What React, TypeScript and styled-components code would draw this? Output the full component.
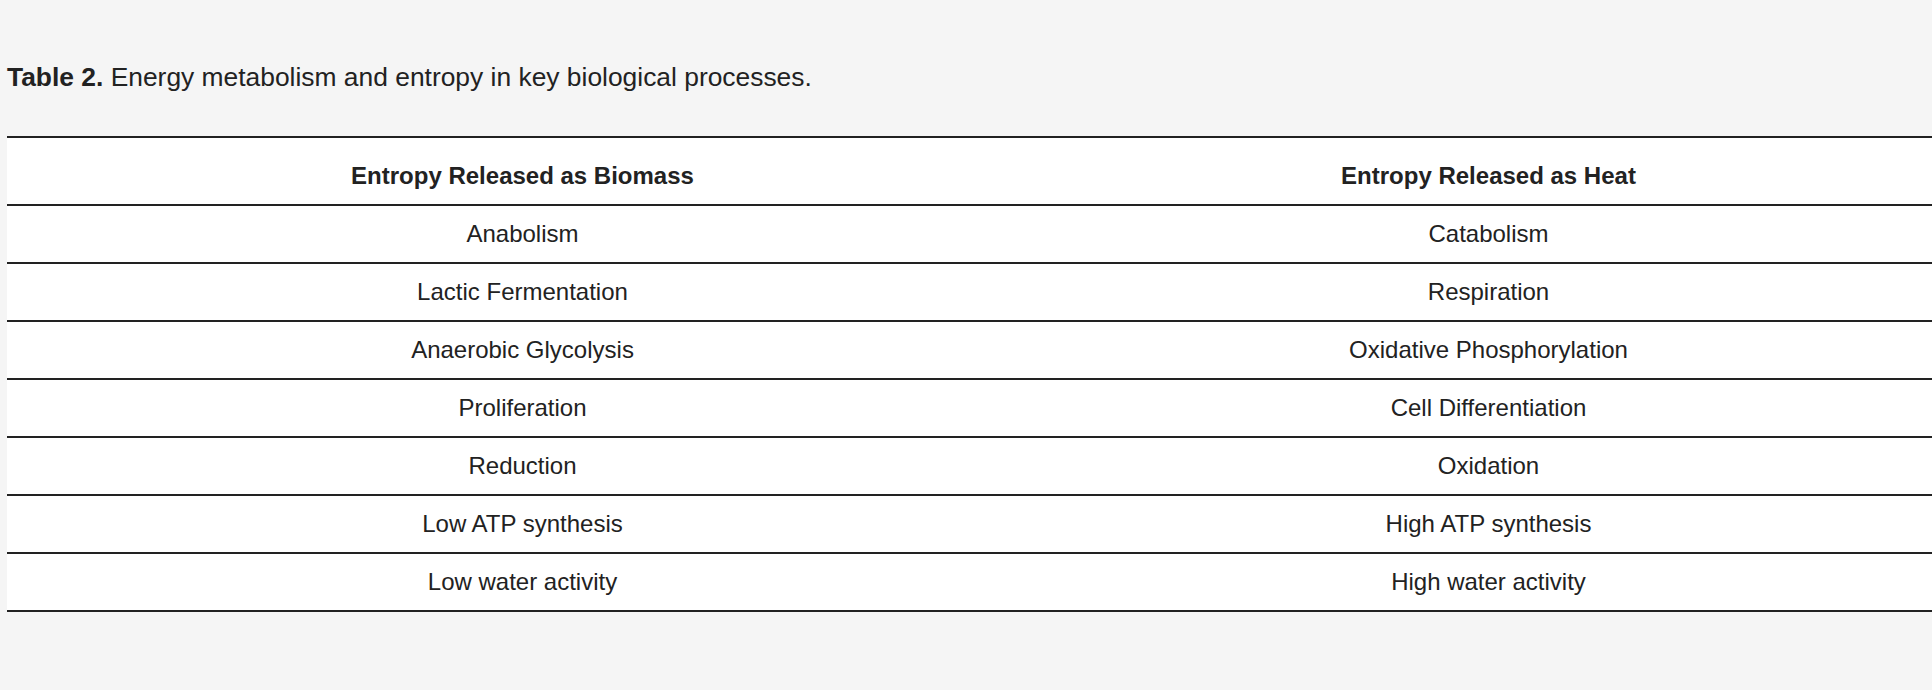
import React from "react";
import styled, { createGlobalStyle } from "styled-components";

const GlobalStyle = createGlobalStyle`
  html, body {
    margin: 0;
    padding: 0;
    background: #f5f5f5;
    overflow: hidden;
  }
  body {
    font-family: "Liberation Sans", Arial, Helvetica, sans-serif;
    color: #222;
  }
`;

const Page = styled.div`
  padding: 62px 0 0 7px;
  overflow: hidden;
`;

const Caption = styled.p`
  margin: 0 0 44px 0;
  font-size: 26.4px;
  line-height: 30px;
  color: #222;
  white-space: nowrap;
`;

const Label = styled.strong`
  font-weight: 700;
`;

const Table = styled.table`
  width: 1932px;
  table-layout: fixed;
  border-collapse: collapse;
  background: #fff;
  border-top: 2px solid #222;
  font-size: 24px;
  line-height: 28px;
`;

const HeadCell = styled.th`
  padding: 24px 20px 14px;
  font-weight: 700;
  text-align: center;
  vertical-align: bottom;
  border-bottom: 2px solid #222;
`;

const Row = styled.tr`
  border-bottom: 2px solid #222;
`;

const Cell = styled.td`
  padding: 14px 20px;
  text-align: center;
  vertical-align: middle;
  font-weight: 400;
`;

const rows: [string, string][] = [
  ["Anabolism", "Catabolism"],
  ["Lactic Fermentation", "Respiration"],
  ["Anaerobic Glycolysis", "Oxidative Phosphorylation"],
  ["Proliferation", "Cell Differentiation"],
  ["Reduction", "Oxidation"],
  ["Low ATP synthesis", "High ATP synthesis"],
  ["Low water activity", "High water activity"],
];

export default function App() {
  return (
    <>
      <GlobalStyle />
      <Page>
        <Caption>
          <Label>Table 2.</Label> Energy metabolism and entropy in key biological processes.
        </Caption>
        <Table>
          <colgroup>
            <col style={{ width: "1031px" }} />
            <col />
          </colgroup>
          <thead>
            <tr>
              <HeadCell>Entropy Released as Biomass</HeadCell>
              <HeadCell>Entropy Released as Heat</HeadCell>
            </tr>
          </thead>
          <tbody>
            {rows.map(([a, b]) => (
              <Row key={a}>
                <Cell>{a}</Cell>
                <Cell>{b}</Cell>
              </Row>
            ))}
          </tbody>
        </Table>
      </Page>
    </>
  );
}
